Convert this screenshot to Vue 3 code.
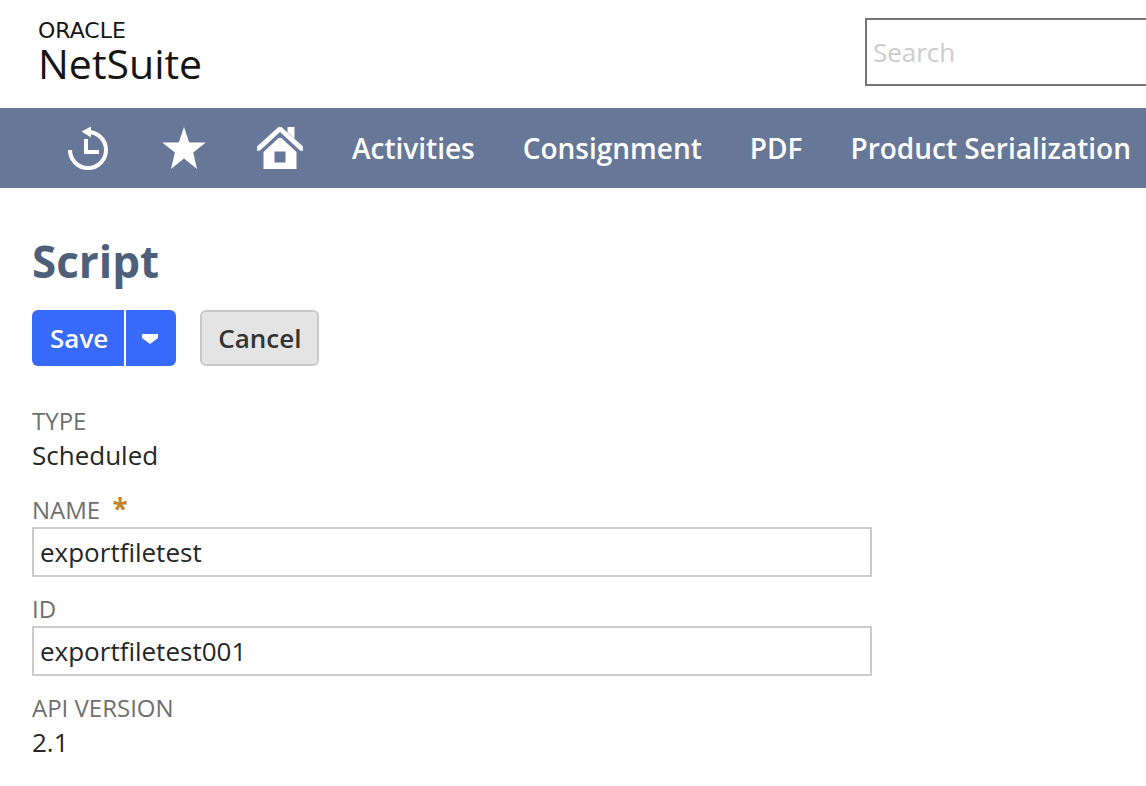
<script setup>
import { ref } from 'vue'

const menu = ['Activities', 'Consignment', 'PDF', 'Product Serialization']
const search = ref('')
const name = ref('exportfiletest')
const scriptId = ref('exportfiletest001')
</script>

<template>
  <div class="page">
    <header class="top">
      <a href="#" class="brand">
        <span class="brand-parent">ORACLE</span>
        <span class="brand-name">NetSuite</span>
      </a>
      <input v-model="search" class="search" type="text" placeholder="Search" aria-label="Search" />
    </header>

    <nav class="nav">
      <a href="#" class="nav-icon" aria-label="Recent records">
        <svg width="48" height="48" viewBox="0 0 48 48">
          <path d="M6 26A18 18 0 1 0 24 8" fill="none" stroke="#fff" stroke-width="4" />
          <path d="M17.500 7.500L27 2.500V13.500Z" fill="#fff" />
          <path d="M22 15V28H35" fill="none" stroke="#fff" stroke-width="4" />
        </svg>
      </a>
      <a href="#" class="nav-icon" aria-label="Shortcuts">
        <svg width="48" height="48" viewBox="0 0 48 48">
          <path d="M24 3L29.200 18.500H45.800L33.200 28.500L37 45L24 34.500L11 45L14.900 28.500L2.200 18.500H18.800Z" fill="#fff" />
        </svg>
      </a>
      <a href="#" class="nav-icon" aria-label="Home">
        <svg width="48" height="48" viewBox="0 0 48 48">
          <path d="M31.500 3H38.500V14.500L31.500 8Z" fill="#fff" />
          <path d="M22.500 3H25.500L47 22.500V27L44 26.500L24 8L4 26.500L1 27V22.500Z" fill="#fff" />
          <path d="M22.500 14H25.500L40.500 28V45H7.500V28ZM18.500 27.500V38.500H29.500V27.500Z" fill="#fff" fill-rule="evenodd" />
        </svg>
      </a>
      <a v-for="item in menu" :key="item" href="#" class="nav-link">{{ item }}</a>
    </nav>

    <main class="content">
      <h1>Script</h1>
      <div class="actions">
        <div class="split">
          <button type="button" class="save">Save</button>
          <button type="button" class="more" aria-label="More save options">
            <svg width="16" height="10" viewBox="0 0 16 10"><path d="M0 0H16V4L8 10L0 4Z" fill="#fff" /></svg>
          </button>
        </div>
        <button type="button" class="cancel">Cancel</button>
      </div>

      <form class="fields" @submit.prevent>
        <div class="field">
          <span class="label">TYPE</span>
          <span class="value">Scheduled</span>
        </div>
        <div class="field">
          <label class="label" for="name">NAME <span class="required">*</span></label>
          <input id="name" v-model="name" type="text" required />
        </div>
        <div class="field">
          <label class="label" for="script-id">ID</label>
          <input id="script-id" v-model="scriptId" type="text" />
        </div>
        <div class="field">
          <span class="label">API VERSION</span>
          <span class="value">2.1</span>
        </div>
      </form>
    </main>
  </div>
</template>

<style>
body {
  margin: 0;
  background: #fff;
}
</style>

<style scoped>
.page {
  font-family: "Open Sans", "Noto Sans", sans-serif;
  font-size: 26px;
  color: #262626;
  overflow: hidden;
}
.page * {
  box-sizing: border-box;
}
input,
button {
  font: inherit;
  margin: 0;
  color: inherit;
}
a {
  color: inherit;
  text-decoration: none;
}
.top {
  display: flex;
  justify-content: space-between;
  align-items: flex-start;
  height: 108px;
  padding: 18px 0 0 38px;
}
.brand {
  display: flex;
  flex-direction: column;
  color: #161513;
}
.brand-parent {
  font-family: "DejaVu Sans", sans-serif;
  font-size: 22px;
  line-height: 26px;
}
.brand-name {
  font-size: 41px;
  line-height: 38px;
}
.search {
  width: 26%;
  height: 68px;
  margin-right: -7px;
  padding: 0 6px;
  border: 2px solid #757575;
  border-radius: 0;
  background: #fff;
}
.search::placeholder {
  color: #ccc;
  opacity: 1;
}
.nav {
  display: flex;
  align-items: center;
  height: 80px;
  padding-left: 40px;
  background: #677797;
  color: #fff;
}
.nav-icon {
  display: flex;
  flex: none;
  justify-content: center;
  width: 96px;
}
.nav-link {
  flex: none;
  padding: 0 24px;
  font-size: 28px;
  font-weight: 600;
}
.content {
  padding: 42px 32px 24px;
}
h1 {
  margin: 0 0 18px;
  font-size: 44px;
  line-height: 62px;
  font-weight: 700;
  color: #4d5f79;
}
.actions {
  display: flex;
  gap: 24px;
  height: 56px;
  font-weight: 600;
}
.split {
  display: flex;
  gap: 2px;
}
.save,
.more {
  border: 0;
  background: #3769fa;
  color: #fff;
}
.save {
  padding: 0 16px 0 18px;
  border-radius: 6px 0 0 6px;
}
.more {
  display: flex;
  align-items: center;
  justify-content: center;
  width: 50px;
  padding: 2px 2px 0 0;
  border-radius: 0 6px 6px 0;
}
.cancel {
  padding: 0 16px;
  border: 2px solid #c8c8c8;
  border-radius: 6px;
  background: #e4e4e4;
  color: #333;
}
.fields {
  display: flex;
  flex-direction: column;
  gap: 15px;
  max-width: 840px;
  margin-top: 38px;
}
.field {
  display: flex;
  flex-direction: column;
}
.label {
  font-size: 24px;
  line-height: 34px;
  color: #6f6f6f;
}
.required {
  margin-left: 6px;
  font-size: 28px;
  line-height: 1;
  font-weight: 700;
  color: #c28529;
}
.value {
  padding-bottom: 6px;
  line-height: 34px;
}
.field input {
  width: 100%;
  height: 50px;
  padding: 0 6px;
  border: 2px solid #ccc;
  border-radius: 0;
  background: #fff;
}
</style>
